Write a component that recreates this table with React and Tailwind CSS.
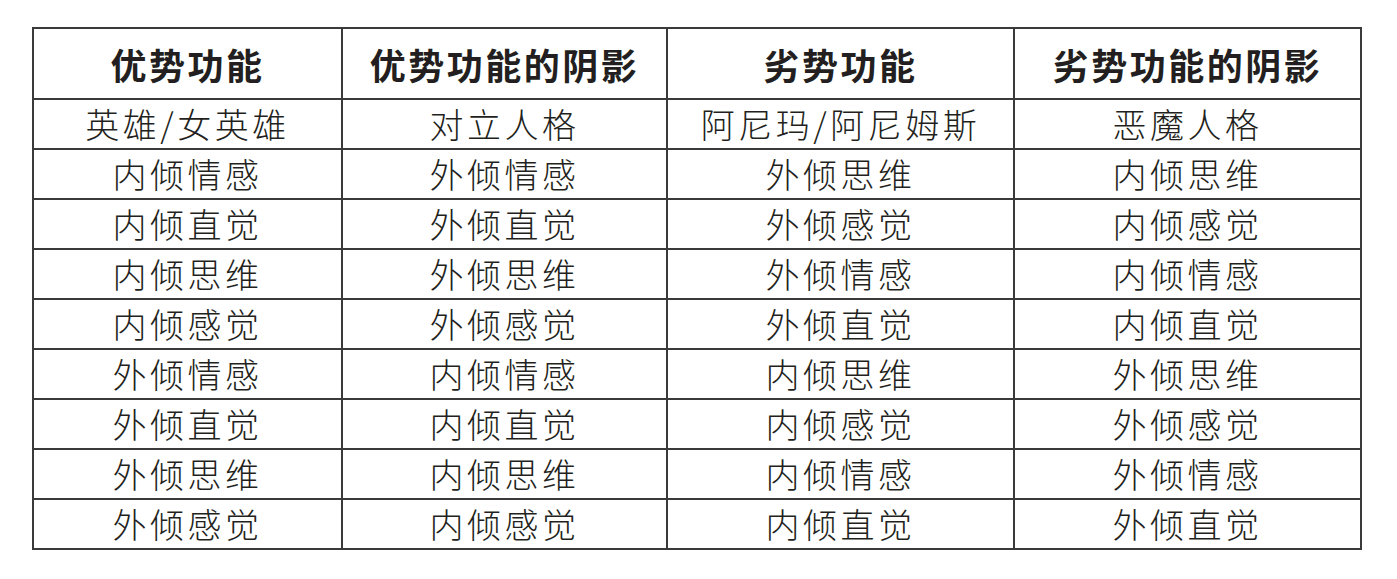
const header = ["优势功能", "优势功能的阴影", "劣势功能", "劣势功能的阴影"];
const rows = [
  ["英雄/女英雄", "对立人格", "阿尼玛/阿尼姆斯", "恶魔人格"],
  ["内倾情感", "外倾情感", "外倾思维", "内倾思维"],
  ["内倾直觉", "外倾直觉", "外倾感觉", "内倾感觉"],
  ["内倾思维", "外倾思维", "外倾情感", "内倾情感"],
  ["内倾感觉", "外倾感觉", "外倾直觉", "内倾直觉"],
  ["外倾情感", "内倾情感", "内倾思维", "外倾思维"],
  ["外倾直觉", "内倾直觉", "内倾感觉", "外倾感觉"],
  ["外倾思维", "内倾思维", "内倾情感", "外倾情感"],
  ["外倾感觉", "内倾感觉", "内倾直觉", "外倾直觉"],
];

export default function App() {
  return (
    <div className="w-[1397px] h-[579px] bg-white pt-[27px] pl-[32px]" style={{ fontFamily: '"Noto Sans CJK SC", "Noto Sans", sans-serif' }}>
      <table className="table-fixed border-collapse border-2 border-[#231f20] text-[#231f20]">
        <colgroup>
          <col className="w-[309px]" />
          <col className="w-[325px]" />
          <col className="w-[347px]" />
          <col className="w-[347px]" />
        </colgroup>
        <thead>
          <tr className="h-[71px]">
            {header.map((h, i) => (
              <th key={i} className="border-2 border-[#3a3a3a] text-center align-middle text-[36px] font-bold tracking-[2.5px] leading-none p-0">
                {h}
              </th>
            ))}
          </tr>
        </thead>
        <tbody>
          {rows.map((r, ri) => (
            <tr key={ri} className="h-[50px]">
              {r.map((c, ci) => (
                <td key={ci} className="border-2 border-[#3a3a3a] text-center align-middle text-[34px] font-light tracking-[3.5px] leading-none p-0">
                  {c}
                </td>
              ))}
            </tr>
          ))}
        </tbody>
      </table>
    </div>
  );
}
